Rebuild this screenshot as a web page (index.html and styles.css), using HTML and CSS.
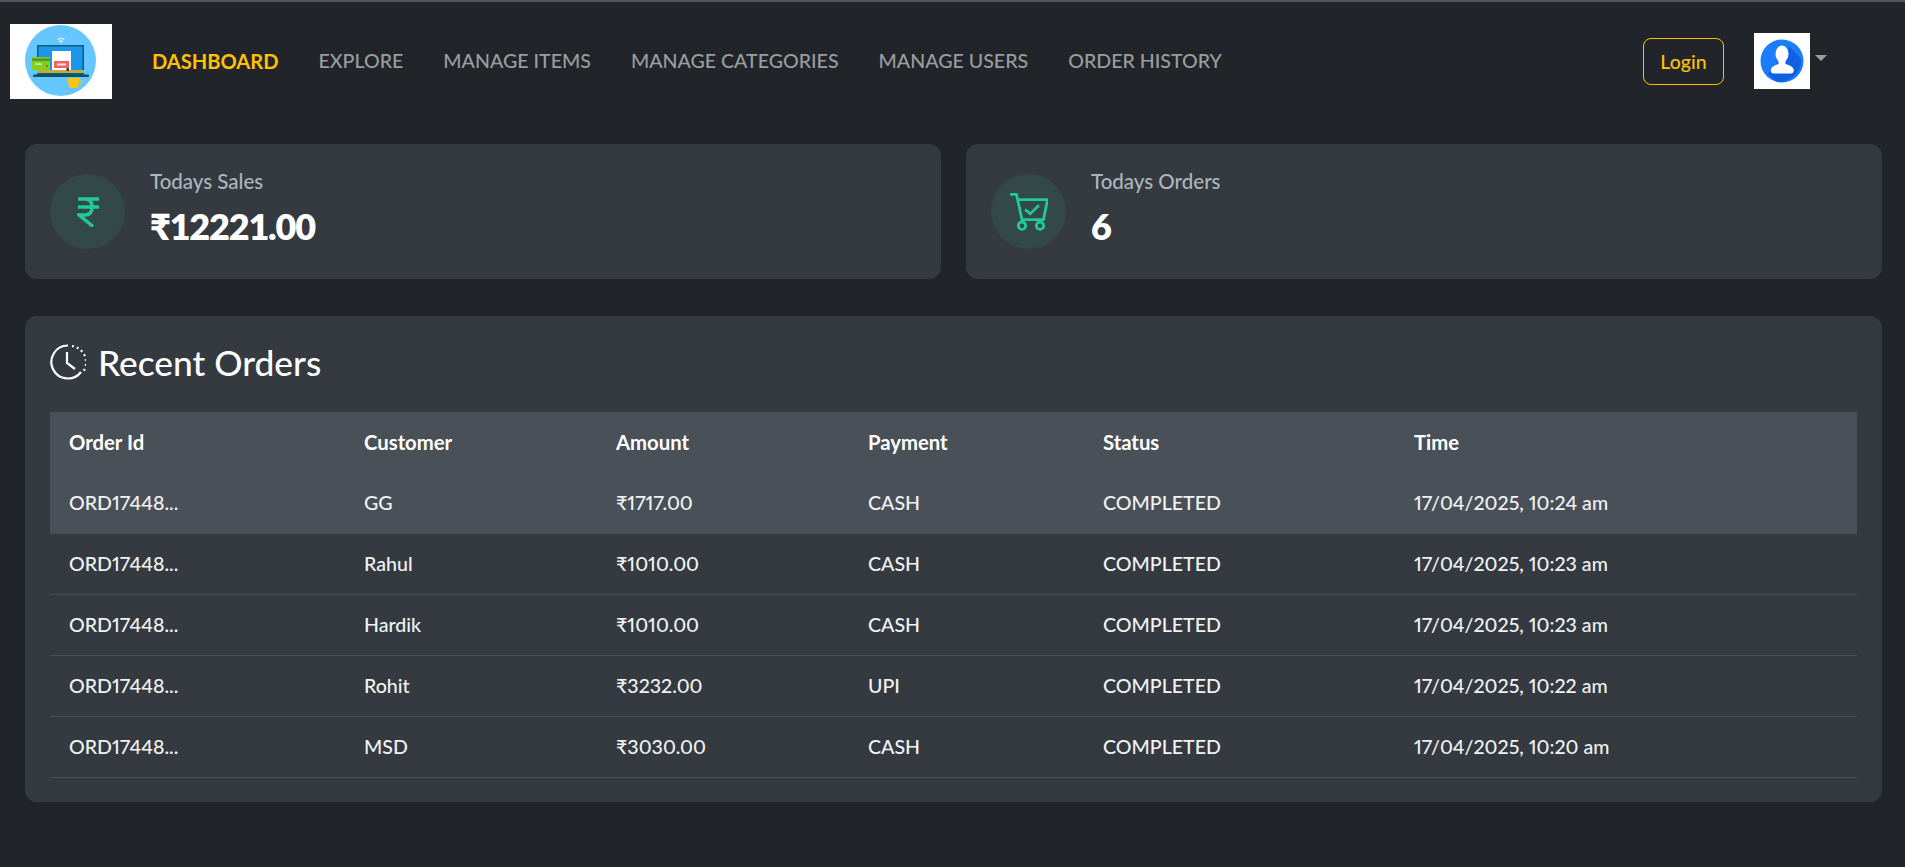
FILE: index.html
```html
<!DOCTYPE html>
<html lang="en">
<head>
    <meta charset="UTF-8">
    <meta name="viewport" content="width=device-width, initial-scale=1.0">
    <title>Dashboard</title>
    <link rel="stylesheet" href="styles.css">
</head>
<body>
    <div class="top-line"></div>
    <nav class="navbar">
        <div class="logo">
            <svg width="102" height="75" viewBox="0 0 102 75">
                <rect width="102" height="75" fill="#fff"/>
                <circle cx="50.500" cy="36.500" r="35.500" fill="#66c6ff"/>
                <path d="M47.500 15.500q3.500-2.500 7 0M49 17.500q2-1.500 4 0M50.500 19h1" stroke="#fff" fill="none" stroke-width="1"/>
                <rect x="27" y="21" width="47" height="30" fill="#0b5f7c"/>
                <rect x="28.500" y="22.500" width="44" height="25" fill="#1b96ea"/>
                <rect x="42" y="27" width="19" height="20" fill="#fff"/>
                <rect x="44" y="37" width="15" height="7" fill="#f56161"/>
                <rect x="47" y="39.500" width="9" height="2" fill="#fde3e3"/>
                <rect x="27" y="46" width="47" height="3" fill="#c9a93a"/>
                <rect x="23" y="50.500" width="56" height="2.500" rx="1" fill="#0b5363"/>
                <rect x="22" y="33" width="18" height="13" fill="#7fd11f"/>
                <rect x="22" y="34.500" width="18" height="2.500" fill="#5a8f2a"/>
                <rect x="25" y="39.500" width="7" height="1.200" fill="#e3f7c4"/>
                <rect x="36" y="41" width="2" height="2" fill="#e04b3c"/>
                <path d="M56.500 44h2.500v3h-2.500z" fill="#17424f"/>
                <path d="M57 54h13l-2.500 10h-8z" fill="#f7c513"/>
                <path d="M69.500 56q3.500 0 2 3t-4 2.500" stroke="#f7c513" fill="none" stroke-width="1"/>
            </svg>
        </div>
        <ul class="nav-links">
            <li class="active">DASHBOARD</li>
            <li>EXPLORE</li>
            <li>MANAGE ITEMS</li>
            <li>MANAGE CATEGORIES</li>
            <li>MANAGE USERS</li>
            <li>ORDER HISTORY</li>
        </ul>
        <button class="login-btn">Login</button>
        <div class="avatar">
            <svg width="56" height="56" viewBox="0 0 56 56">
                <rect width="56" height="56" fill="#fff"/>
                <circle cx="28" cy="28" r="21.500" fill="#1a7dfb"/>
                <path d="M36 14L47 26A21.500 21.500 0 0 1 22 48.500L14 41z" fill="#1160e4"/>
                <ellipse cx="28" cy="21" rx="6.500" ry="8.500" fill="#fff"/>
                <path d="M24.500 27h7v4q7 2 8 5 1 4-2 4.500H19q-3-.5-2-4.500 1-3 7.500-5z" fill="#fff"/>
            </svg>
        </div>
        <span class="caret"></span>
    </nav>

    <main class="content">
        <section class="stats">
            <div class="stat-card">
                <div class="stat-icon">
                    <svg width="22" height="30" viewBox="0 0 22 30" fill="none" stroke="#20c997" stroke-width="3.500">
                        <path d="M1 2H22M1 10H22M3 2H8Q15 2 15 10T8 18H2L16 29.500"/>
                    </svg>
                </div>
                <div>
                    <p class="stat-label">Todays Sales</p>
                    <p class="stat-value">₹12221.00</p>
                </div>
            </div>
            <div class="stat-card">
                <div class="stat-icon">
                    <svg width="38" height="38" viewBox="0 0 38 38" fill="none" stroke="#20c997" stroke-width="2.800">
                        <path d="M0 1.400H6.500L12 26.700H33.500L37.500 6.700H8"/>
                        <circle cx="12" cy="32.700" r="3.700"/>
                        <circle cx="30" cy="32.700" r="3.700"/>
                        <path d="M15 16.500L20.200 20.700L29 12.300"/>
                    </svg>
                </div>
                <div>
                    <p class="stat-label">Todays Orders</p>
                    <p class="stat-value">6</p>
                </div>
            </div>
        </section>

        <section class="orders-card">
            <h2 class="orders-title">
                <svg width="36" height="36" viewBox="0 0 36 36" fill="none" stroke="#fff" stroke-width="2.200">
                    <path d="M18 1.500A16.500 16.500 0 1 0 31 28"/>
                    <path d="M22 2A16.500 16.500 0 0 1 33 28" stroke-dasharray="2 3"/>
                    <path d="M17 8V19L25 25"/>
                </svg>
                Recent Orders
            </h2>
            <table class="orders-table">
                <thead>
                    <tr>
                        <th class="col-id">Order Id</th>
                        <th class="col-customer">Customer</th>
                        <th class="col-amount">Amount</th>
                        <th class="col-payment">Payment</th>
                        <th class="col-status">Status</th>
                        <th>Time</th>
                    </tr>
                </thead>
                <tbody>
                    <tr><td>ORD17448...</td><td>GG</td><td>₹1717.00</td><td>CASH</td><td>COMPLETED</td><td>17/04/2025, 10:24 am</td></tr>
                    <tr><td>ORD17448...</td><td>Rahul</td><td>₹1010.00</td><td>CASH</td><td>COMPLETED</td><td>17/04/2025, 10:23 am</td></tr>
                    <tr><td>ORD17448...</td><td>Hardik</td><td>₹1010.00</td><td>CASH</td><td>COMPLETED</td><td>17/04/2025, 10:23 am</td></tr>
                    <tr><td>ORD17448...</td><td>Rohit</td><td>₹3232.00</td><td>UPI</td><td>COMPLETED</td><td>17/04/2025, 10:22 am</td></tr>
                    <tr><td>ORD17448...</td><td>MSD</td><td>₹3030.00</td><td>CASH</td><td>COMPLETED</td><td>17/04/2025, 10:20 am</td></tr>
                </tbody>
            </table>
        </section>
    </main>
</body>
</html>
```

FILE: styles.css
```css
* {
    box-sizing: border-box;
}
body {
    font-family: Lato, "Noto Sans", sans-serif;
    font-weight: 500;
    margin: 0;
    height: 867px;
    overflow: hidden;
    background-color: #212529;
    color: #fff;
}
.top-line {
    height: 2px;
    background-color: #555;
}
.navbar {
    display: flex;
    align-items: center;
    height: 117px;
    padding: 0 0 0 10px;
}
.logo {
    display: flex;
    margin-top: 2px;
}
.nav-links {
    display: flex;
    gap: 40px;
    list-style: none;
    margin: 0 0 0 40px;
    padding: 0;
    flex: 1;
    font-size: 19.600px;
    color: #9a9da0;
}
.nav-links .active {
    color: #ffc107;
    font-size: 20.100px;
    font-weight: 700;
}
.login-btn {
    width: 81px;
    height: 47px;
    margin-top: 2px;
    font: 500 19.500px Lato, sans-serif;
    color: #ffc107;
    background: transparent;
    border: 1px solid #ffc107;
    border-radius: 8px;
}
.avatar {
    display: flex;
    margin: 1px 0 0 30px;
}
.caret {
    width: 0;
    height: 0;
    margin: 0 78px 5px 5px;
    border-left: 6px solid transparent;
    border-right: 6px solid transparent;
    border-top: 6px solid #9a9da0;
}
.content {
    padding: 25px 23px 0 25px;
}
.stats {
    display: grid;
    grid-template-columns: 1fr 1fr;
    gap: 25px;
    margin-bottom: 37px;
}
.stat-card {
    display: flex;
    gap: 25px;
    height: 135px;
    padding: 30px 25px;
    background-color: #343a40;
    border-radius: 12px;
}
.stat-icon {
    display: flex;
    align-items: center;
    justify-content: center;
    width: 75px;
    height: 75px;
    border-radius: 50%;
    background-color: #324849;
}
.stat-label {
    margin: -8px 0 0;
    font-size: 20.500px;
    line-height: 30px;
    color: #adb5bd;
}
.stat-value {
    margin: 5px 0 0;
    font-size: 36px;
    font-weight: 800;
    line-height: 50px;
    letter-spacing: -1.2px;
}
.orders-card {
    height: 486px;
    padding: 25px;
    background-color: #343a40;
    border-radius: 12px;
}
.orders-title {
    display: flex;
    align-items: center;
    gap: 12px;
    height: 42px;
    margin: 0 0 29px;
    font-size: 35.300px;
    font-weight: 500;
}
.orders-table {
    width: 100%;
    border-collapse: collapse;
    table-layout: fixed;
    font-size: 19.600px;
    font-variant-numeric: proportional-nums;
}
.orders-table th,
.orders-table td {
    height: 61px;
    padding: 0 19px;
    text-align: left;
    white-space: nowrap;
}
.orders-table th {
    height: 60px;
    font-size: 20.300px;
    font-weight: 700;
    background-color: #495057;
}
.orders-table td {
    border-bottom: 1px solid #495057;
    color: #f1f3f5;
}
.orders-table tbody tr:first-child td {
    background-color: #495057;
}
.col-id {
    width: 295px;
}
.col-customer {
    width: 252px;
}
.col-amount {
    width: 252px;
}
.col-payment {
    width: 235px;
}
.col-status {
    width: 311px;
}
```
